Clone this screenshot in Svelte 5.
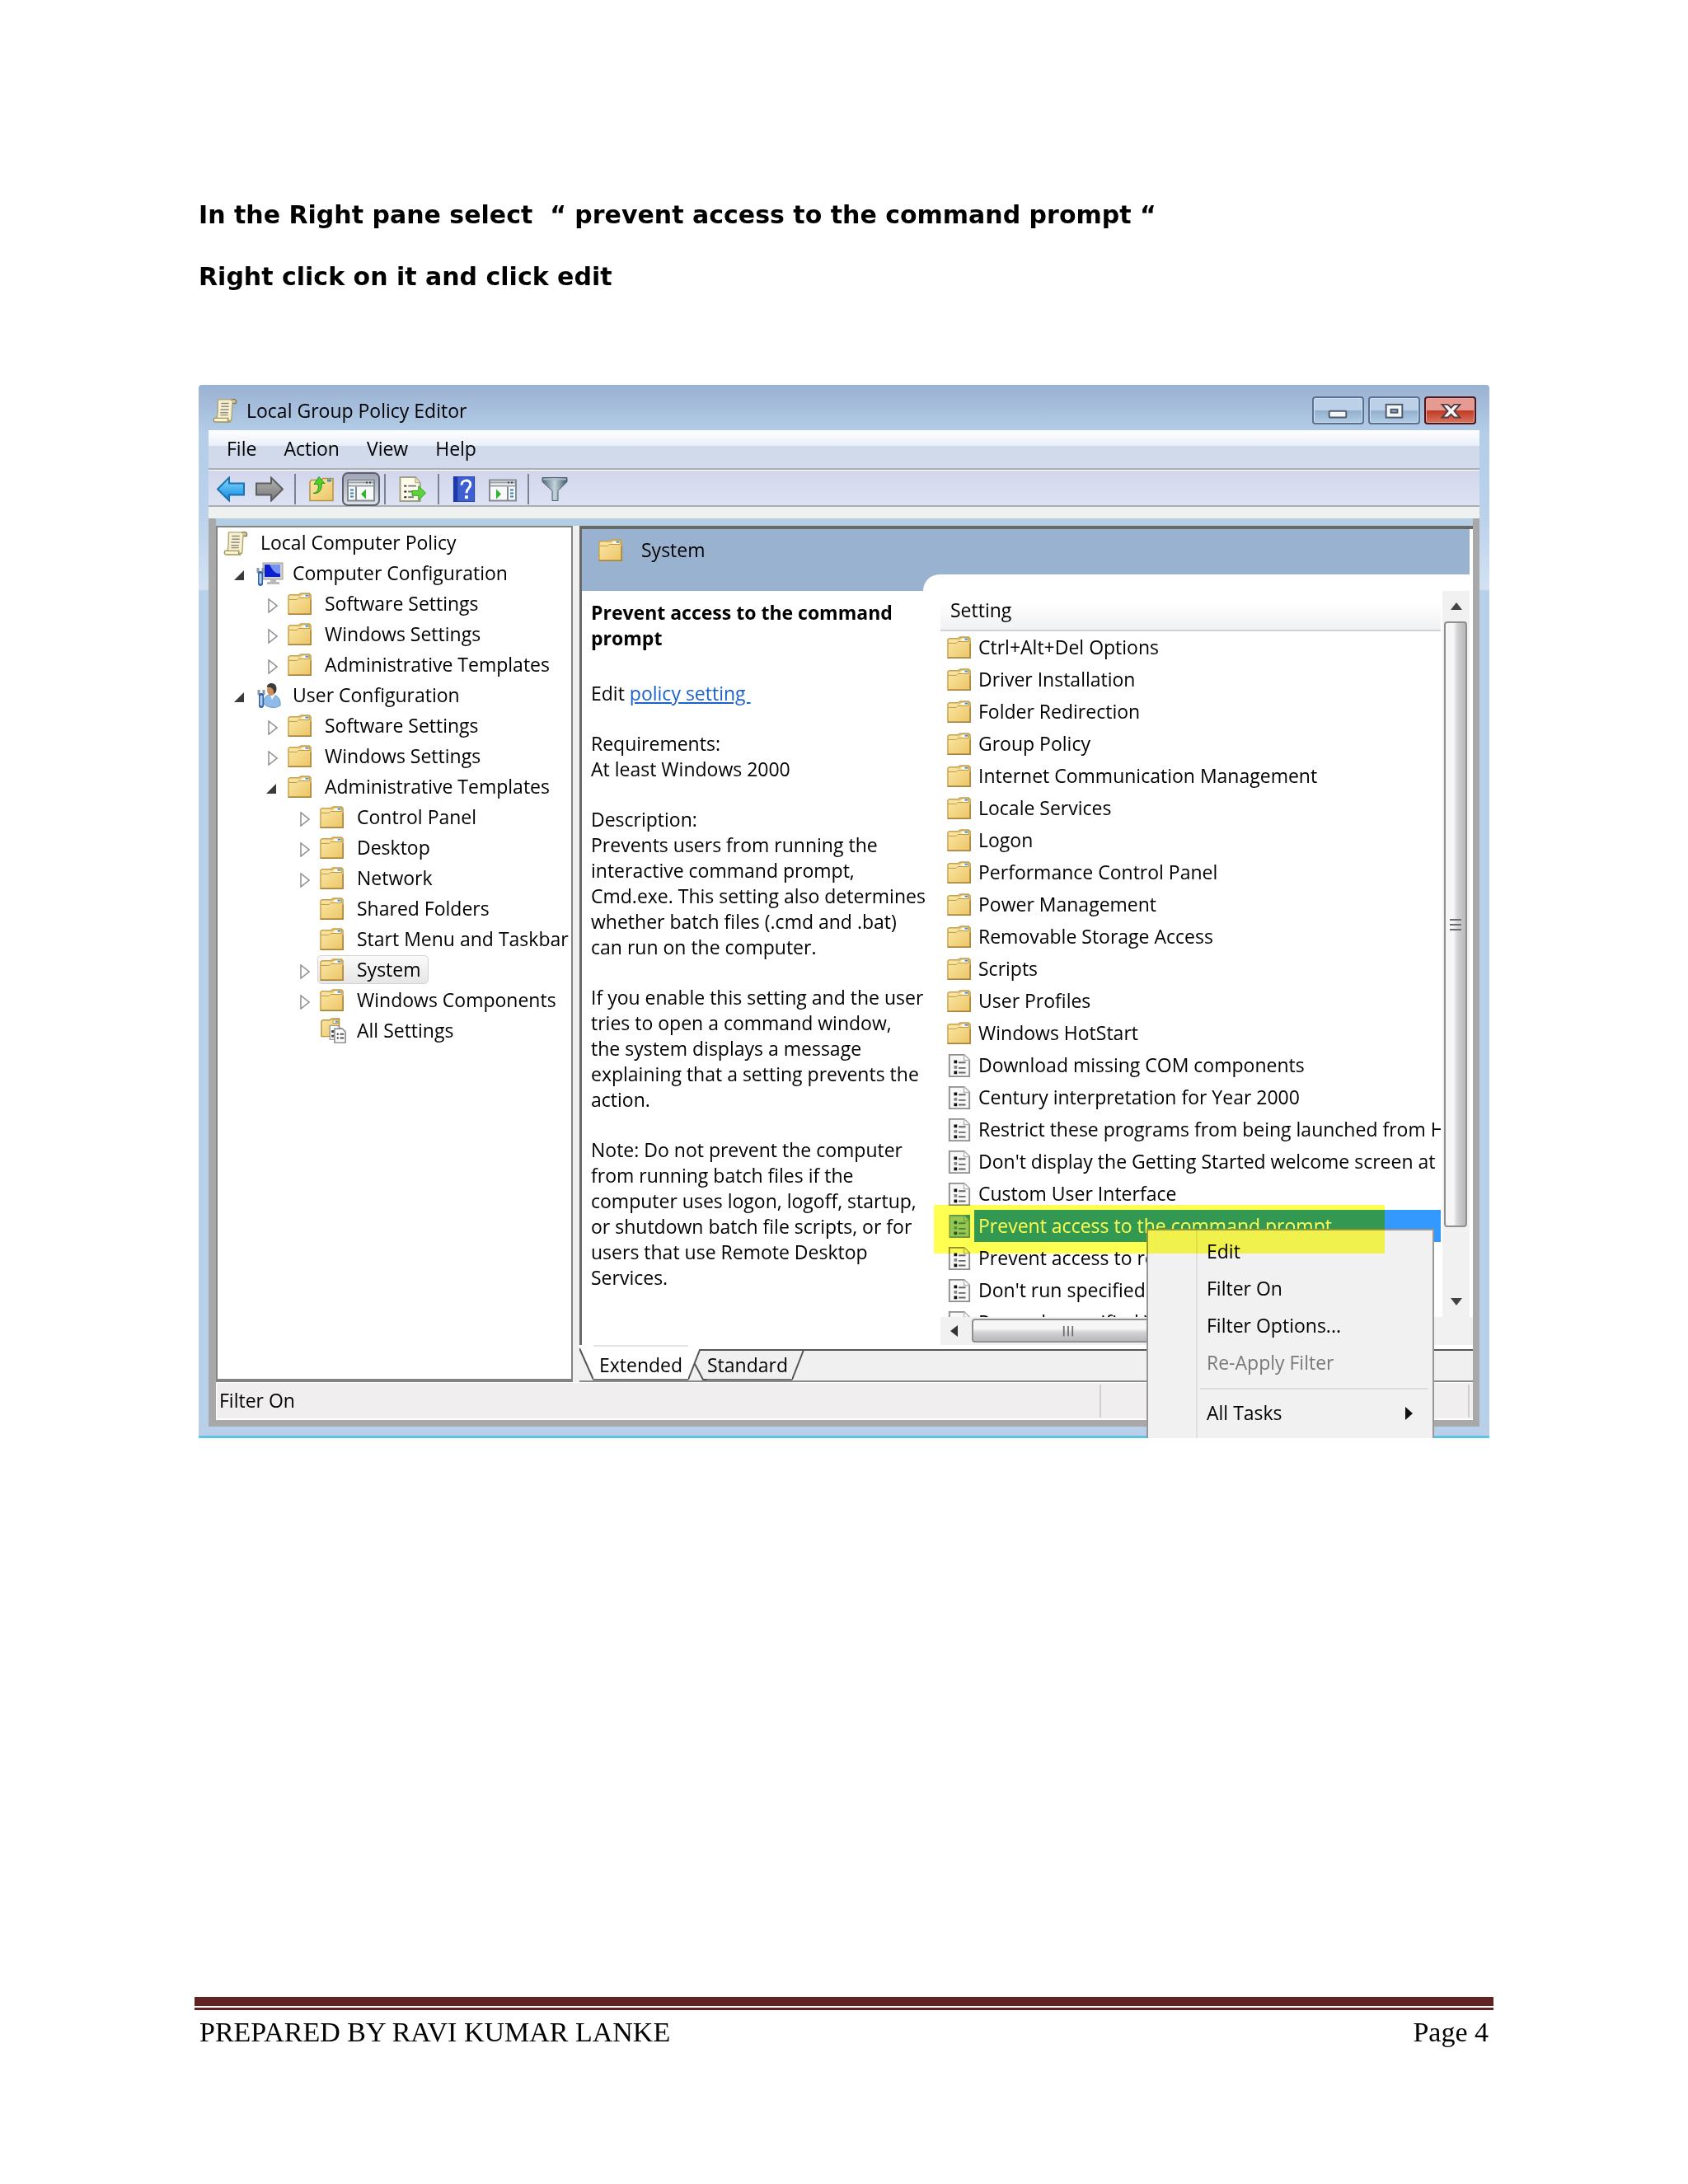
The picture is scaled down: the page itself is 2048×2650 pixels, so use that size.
<script>
	//-- tree shown in the left pane, one entry per row
	const tree = [
		{ label: 'Local Computer Policy', level: 0, icon: 'scroll' },
		{ label: 'Computer Configuration', level: 1, icon: 'computer', open: true },
		{ label: 'Software Settings', level: 2, icon: 'folder', open: false },
		{ label: 'Windows Settings', level: 2, icon: 'folder', open: false },
		{ label: 'Administrative Templates', level: 2, icon: 'folder', open: false },
		{ label: 'User Configuration', level: 1, icon: 'user', open: true },
		{ label: 'Software Settings', level: 2, icon: 'folder', open: false },
		{ label: 'Windows Settings', level: 2, icon: 'folder', open: false },
		{ label: 'Administrative Templates', level: 2, icon: 'folder', open: true },
		{ label: 'Control Panel', level: 3, icon: 'folder', open: false },
		{ label: 'Desktop', level: 3, icon: 'folder', open: false },
		{ label: 'Network', level: 3, icon: 'folder', open: false },
		{ label: 'Shared Folders', level: 3, icon: 'folder' },
		{ label: 'Start Menu and Taskbar', level: 3, icon: 'folder' },
		{ label: 'System', level: 3, icon: 'folder', open: false },
		{ label: 'Windows Components', level: 3, icon: 'folder', open: false },
		{ label: 'All Settings', level: 3, icon: 'all' }
	];

	const folders = [
		'Ctrl+Alt+Del Options',
		'Driver Installation',
		'Folder Redirection',
		'Group Policy',
		'Internet Communication Management',
		'Locale Services',
		'Logon',
		'Performance Control Panel',
		'Power Management',
		'Removable Storage Access',
		'Scripts',
		'User Profiles',
		'Windows HotStart'
	];

	const policies = [
		'Download missing COM components',
		'Century interpretation for Year 2000',
		'Restrict these programs from being launched from Help',
		"Don't display the Getting Started welcome screen at logon",
		'Custom User Interface',
		'Prevent access to the command prompt',
		'Prevent access to registry editing tools',
		"Don't run specified Windows applications",
		'Run only specified Windows applications'
	];

	const settings = [
		...folders.map((label) => ({ label, icon: 'folder' })),
		...policies.map((label) => ({ label, icon: 'policy' }))
	];

	const menus = ['File', 'Action', 'View', 'Help'];

	let node = $state(14);
	let setting = $state(18);
</script>

{#snippet icon(name)}
	{#if name === 'folder'}
		<svg class="icon" viewBox="0 0 32 30" aria-hidden="true">
			<path d="M1 4.500L3 3H14L17 1H28L30 3V28H1Z" fill="url(#folderFill)" stroke="#c6a04c" stroke-width="1.500" />
			<path d="M15 5L18 2H28V7H14L12 9H2" fill="#fbe7a6" stroke="#b8923f" stroke-width="1" />
			<rect x="19" y="3" width="8" height="3" fill="#fff" />
			<rect x="23" y="3" width="4" height="2" fill="#3b8fd0" />
			<path d="M1 28H30V9" fill="none" stroke="#a8823a" stroke-width="1.500" />
		</svg>
	{:else if name === 'policy'}
		<svg class="icon" viewBox="0 0 32 30" aria-hidden="true">
			<path d="M3 1H22L29 8V29H3Z" fill="#f8f8f8" stroke="#8d8d8d" stroke-width="2" />
			<path d="M22 1V8H29" fill="#fff" stroke="#b5b5b5" stroke-width="1.500" />
			<path d="M9 8h4v4h-4zM9 22h4v4h-4z" fill="#111" />
			<path d="M9 15h4v4h-4z" fill="#888" />
			<path d="M15 11H24M15 18H24M15 24H24" stroke="#666" stroke-width="2" />
		</svg>
	{:else if name === 'all'}
		<svg class="icon wide" viewBox="0 0 34 34" aria-hidden="true">
			<path d="M1 4.500L3 3H12L14 1H24V24H1Z" fill="url(#folderFill)" stroke="#b8923f" stroke-width="1.500" />
			<rect x="16" y="3" width="7" height="4" fill="#fff" stroke="#b8923f" />
			<rect x="19" y="4" width="3" height="2" fill="#3b8fd0" />
			<path d="M12 10H22L26 14V28H12Z" fill="#fff" stroke="#9a9a9a" stroke-width="1.500" />
			<path d="M14 16h3v3h-3zM14 22h3v3h-3z" fill="#444" />
			<path d="M18 14H28L32 18V32H18Z" fill="#fff" stroke="#7d7d7d" stroke-width="1.500" />
			<path d="M21 20h2v2h-2zM21 25h2v2h-2z" fill="#222" />
			<path d="M25 21H30M25 26H30" stroke="#555" stroke-width="2" />
		</svg>
	{:else if name === 'scroll'}
		<svg class="icon" viewBox="0 0 32 32" aria-hidden="true">
			<path d="M7 2H27C24 5 26 18 24 29H4C8 24 6 10 7 2Z" fill="#f8f1cf" stroke="#b0a673" stroke-width="1.500" />
			<path d="M24 3C27 0 32 2 30 7H26" fill="#cfc79c" stroke="#857d55" stroke-width="1.500" />
			<path d="M2 26H20C19 28 20 31 23 31H4C1 31 1 28 2 26Z" fill="#fdf6d2" stroke="#a0935c" stroke-width="1.500" />
			<path d="M11 7H21M11 11H21M10 15H21M10 19H20M10 22H20" stroke="#8e8b85" stroke-width="1.500" />
		</svg>
	{:else if name === 'computer'}
		<svg class="icon wide" viewBox="0 0 34 30" aria-hidden="true">
			<rect x="9" y="2" width="24" height="20" fill="#cfd0d0" stroke="#9b9b98" />
			<rect x="11" y="4" width="19" height="15" fill="#0a1fd0" />
			<path d="M17 4H30V15C24 16 20 10 17 4Z" fill="#7492ee" />
			<path d="M18 22h7v3h4v3H14v-3h4z" fill="#b9b9b7" />
			<path d="M3 8v5l3 2 3-2V8" fill="none" stroke="#8b98a8" stroke-width="3" />
			<path d="M6 15V27" stroke="#2f62a8" stroke-width="6" stroke-linecap="round" />
			<path d="M6 16V26" stroke="#b5d0ef" stroke-width="3" stroke-linecap="round" />
		</svg>
	{:else if name === 'user'}
		<svg class="icon wide" viewBox="0 0 34 30" aria-hidden="true">
			<path d="M10 25C9 16 14 14 20 14C27 14 31 20 30 27C24 31 15 30 10 25Z" fill="#8fbbe9" stroke="#6797cb" />
			<path d="M17 13L20 20L24 14Z" fill="#eef5fc" />
			<ellipse cx="19" cy="8" rx="5" ry="7" fill="#c98f5d" />
			<path d="M14 7C13 0 19-1 23 1C27 4 26 12 22 13C23 7 19 4 14 5Z" fill="#3d3b38" />
			<path d="M4 8v5l3 2 3-2V8" fill="none" stroke="#8b98a8" stroke-width="3" />
			<path d="M7 15V27" stroke="#2f62a8" stroke-width="6" stroke-linecap="round" />
			<path d="M7 16V26" stroke="#b5d0ef" stroke-width="3" stroke-linecap="round" />
		</svg>
	{/if}
{/snippet}

<!-- gradients shared by the icons -->
<svg class="defs" aria-hidden="true">
	<defs>
		<linearGradient id="folderFill" x1="0" y1="0" x2="1" y2="1">
			<stop offset="0" stop-color="#fbe9a9" />
			<stop offset="1" stop-color="#ecc566" />
		</linearGradient>
		<linearGradient id="blueArrow" x1="0" y1="0" x2="0" y2="1">
			<stop offset="0" stop-color="#8bdcff" />
			<stop offset="1" stop-color="#0a86e0" />
		</linearGradient>
		<linearGradient id="greyArrow" x1="0" y1="0" x2="0" y2="1">
			<stop offset="0" stop-color="#b4b4b4" />
			<stop offset="1" stop-color="#777" />
		</linearGradient>
		<linearGradient id="funnel" x1="0" y1="0" x2="1" y2="0">
			<stop offset="0" stop-color="#4d6574" />
			<stop offset="0.500" stop-color="#c6d5dc" />
			<stop offset="1" stop-color="#3c5666" />
		</linearGradient>
	</defs>
</svg>

<main class="page">
	<p class="step">In the Right pane select &nbsp;“ prevent access to the command prompt “</p>
	<p class="step">Right click on it and click edit</p>

	<section class="window" aria-label="Local Group Policy Editor">
		<header class="titlebar">
			{@render icon('scroll')}
			<span class="title">Local Group Policy Editor</span>
			<button class="caption" aria-label="Minimize">
				<svg viewBox="0 0 60 30"><rect x="19" y="16" width="21" height="8" rx="1" fill="#f4f6f8" stroke="#4f5b6c" stroke-width="2" /></svg>
			</button>
			<button class="caption" aria-label="Maximize">
				<svg viewBox="0 0 60 30">
					<rect x="20" y="8" width="20" height="16" fill="#f4f6f8" stroke="#4f5b6c" stroke-width="2" />
					<rect x="26" y="14" width="8" height="4" fill="#93abc8" stroke="#4f5b6c" stroke-width="2" />
				</svg>
			</button>
			<button class="caption close" aria-label="Close">
				<svg viewBox="0 0 60 30">
					<path d="M20 8h7l4 4 4-4h7l-7 8 7 8h-7l-4-4-4 4h-7l7-8z" fill="#f6f6f6" stroke="#5a3c44" stroke-width="2" />
				</svg>
			</button>
		</header>

		<nav class="menubar">
			{#each menus as name}
				<button>{name}</button>
			{/each}
		</nav>

		<div class="toolbar">
			<button class="tool" aria-label="Back">
				<svg viewBox="0 0 34 30"><path d="M1 15L15 1V8H33V22H15V29Z" fill="url(#blueArrow)" stroke="#1b72ad" stroke-width="2" /></svg>
			</button>
			<button class="tool" aria-label="Forward">
				<svg viewBox="0 0 34 30"><path d="M33 15L19 1V8H1V22H19V29Z" fill="url(#greyArrow)" stroke="#5e5e5e" stroke-width="2" /></svg>
			</button>
			<i class="sep"></i>
			<button class="tool" aria-label="Up one level">
				<svg viewBox="0 0 34 30">
					<path d="M4 6L6 4H18L20 2H32V29H4Z" fill="url(#folderFill)" stroke="#b8923f" stroke-width="1.500" />
					<rect x="25" y="3" width="5" height="3" fill="#3b8fd0" />
					<path d="M8 20C14 19 15 14 14 9H9L15 0L22 8H18C19 15 16 21 8 20Z" fill="#51cf2a" stroke="#2b961a" stroke-width="1" />
				</svg>
			</button>
			<button class="tool pressed" aria-label="Show or hide console tree" aria-pressed="true">
				<svg viewBox="0 0 34 30">
					<rect x="1" y="4" width="32" height="25" fill="#f7f9fa" stroke="#858b93" stroke-width="2" />
					<path d="M2 7H32M2 11H32" stroke="#9aa0a8" stroke-width="2" />
					<path d="M23 7h2M27 7h2" stroke="#444" stroke-width="2" />
					<path d="M11 12V29" stroke="#888" stroke-width="2" />
					<path d="M4 16H8M4 20H8M4 24H8" stroke="#3a7fc0" stroke-width="2" />
					<path d="M23 15V27L17 21Z" fill="#2fb52a" />
				</svg>
			</button>
			<i class="sep tight"></i>
			<button class="tool" aria-label="Export list">
				<svg viewBox="0 0 34 32">
					<path d="M1 1H20L26 8V31H1Z" fill="#fcfae8" stroke="#a39f82" stroke-width="2" />
					<path d="M20 1V8H26" fill="#e4e0c2" stroke="#a39f82" />
					<path d="M6 11h3v2h-3zM6 18h3v2h-3zM6 25h3v2h-3z" fill="#222" />
					<path d="M11 12H21M11 19H18M11 26H18" stroke="#777" stroke-width="2" />
					<path d="M16 18H24V12L33 21L24 30V24H16Z" fill="#5fd43a" stroke="#2f9c20" stroke-width="1" />
				</svg>
			</button>
			<i class="sep"></i>
			<button class="tool" aria-label="Help">
				<svg viewBox="0 0 34 32">
					<rect x="4" y="0" width="26" height="32" fill="#3d5fd0" stroke="#1c3490" />
					<rect x="4" y="0" width="5" height="32" fill="#1d3aa6" />
					<path d="M14 11C13 4 25 3 25 10C25 15 20 15 20 21" fill="none" stroke="#fff" stroke-width="3" />
					<rect x="18" y="24" width="4" height="4" fill="#fff" />
				</svg>
			</button>
			<button class="tool" aria-label="Show or hide action pane">
				<svg viewBox="0 0 34 30">
					<rect x="1" y="4" width="32" height="25" fill="#f7f9fa" stroke="#858b93" stroke-width="2" />
					<path d="M2 7H32M2 11H32" stroke="#9aa0a8" stroke-width="2" />
					<path d="M23 7h2M27 7h2" stroke="#444" stroke-width="2" />
					<path d="M23 12V29" stroke="#888" stroke-width="2" />
					<path d="M26 16H30M26 20H30M26 24H30" stroke="#3a7fc0" stroke-width="2" />
					<path d="M9 15V27L15 21Z" fill="#2fb52a" />
				</svg>
			</button>
			<i class="sep"></i>
			<button class="tool" aria-label="Filter">
				<svg viewBox="0 0 34 30">
					<path d="M3 1H33V6L22 17V29H15V17L3 6Z" fill="url(#funnel)" stroke="#4a6070" stroke-width="1" />
					<path d="M4 3H32" stroke="#a9bcc6" stroke-width="2" />
				</svg>
			</button>
		</div>

		<div class="band"></div>

		<div class="client">
			<div class="panes">
				<ul class="tree">
					{#each tree as row, i}
						<li class="row level{row.level}">
							{#if row.level > 0}
								<span class="twist">
									{#if row.open === true}
										<svg viewBox="0 0 12 12"><path d="M12 0V12H0Z" fill="#3a3a3a" /></svg>
									{:else if row.open === false}
										<svg class="shut" viewBox="0 0 12 18"><path d="M1 1V17L11 9Z" fill="#fff" stroke="#8f8f8f" stroke-width="1.500" /></svg>
									{/if}
								</span>
							{/if}
							<button class="node" class:selected={node === i} onclick={() => (node = i)}>
								<span class="slot">{@render icon(row.icon)}</span>{row.label}
							</button>
						</li>
					{/each}
				</ul>

				<div class="result">
					<div class="view">
						<div class="heading">
							<h2>{@render icon('folder')}System</h2>
							<div class="curve"></div>
						</div>
						<div class="body">
							<article class="extended">
								<h3>Prevent access to the command<br />prompt</h3>
								<p class="edit">Edit <a href="#policy">policy setting&nbsp;</a></p>
								<p>Requirements:<br />At least Windows 2000</p>
								<p>
									Description:<br />Prevents users from running the<br />interactive command prompt,<br />
									Cmd.exe. This setting also determines<br />whether batch files (.cmd and .bat)<br />
									can run on the computer.
								</p>
								<p>
									If you enable this setting and the user<br />tries to open a command window,<br />
									the system displays a message<br />explaining that a setting prevents the<br />action.
								</p>
								<p>
									Note: Do not prevent the computer<br />from running batch files if the<br />
									computer uses logon, logoff, startup,<br />or shutdown batch file scripts, or for<br />
									users that use Remote Desktop<br />Services.
								</p>
							</article>

							<div class="list">
								<div class="across">
									<div class="items">
										<button class="column">Setting</button>
										<ul>
											{#each settings as item, i}
												<li>
													<button class="item" class:selected={setting === i} onclick={() => (setting = i)}>
														<span class="slot">{@render icon(item.icon)}</span>
														<span class="name">{item.label}</span>
													</button>
												</li>
											{/each}
										</ul>
									</div>
									<div class="vscroll">
										<button class="arrow" aria-label="Scroll up">
											<svg viewBox="0 0 14 9"><path d="M0 9L7 0L14 9Z" fill="#444" /></svg>
										</button>
										<div class="thumb">
											<svg viewBox="0 0 14 16"><path d="M0 2H14M0 8H14M0 14H14" stroke="#6d6d6d" stroke-width="2" /></svg>
										</div>
										<button class="arrow" aria-label="Scroll down">
											<svg viewBox="0 0 14 9"><path d="M0 0L7 9L14 0Z" fill="#444" /></svg>
										</button>
									</div>
								</div>
								<div class="hscroll">
									<button class="arrow" aria-label="Scroll left">
										<svg viewBox="0 0 9 14"><path d="M9 0L0 7L9 14Z" fill="#333" /></svg>
									</button>
									<div class="thumb">
										<svg viewBox="0 0 16 14"><path d="M2 0V14M8 0V14M14 0V14" stroke="#6d6d6d" stroke-width="2" /></svg>
									</div>
								</div>
							</div>
						</div>
					</div>

					<div class="tabs">
						<svg class="slant" width="17" height="43" viewBox="0 0 17 43">
							<path d="M0 0H17V43L0 4Z" fill="#fff" />
							<path d="M0 4L17 42" stroke="#555" stroke-width="2" />
						</svg>
						<button class="tab active">Extended</button>
						<svg class="slant" width="23" height="43" viewBox="0 0 23 43">
							<path d="M0 0H23V5H14L0 43Z" fill="#fff" />
							<path d="M0 42L14 6H23M8 23L18 42H23" fill="none" stroke="#555" stroke-width="2" />
						</svg>
						<button class="tab">Standard</button>
						<svg class="slant" width="17" height="43" viewBox="0 0 17 43">
							<path d="M0 0H17V5H0Z" fill="#fff" />
							<path d="M0 6H17M0 42L14 6" fill="none" stroke="#555" stroke-width="2" />
						</svg>
						<div class="rest"></div>
					</div>
				</div>
			</div>

			<footer class="status">
				<span>Filter On</span>
				<i></i>
			</footer>
		</div>

		<div class="context">
			<div class="gutter"></div>
			<div class="commands">
				<button>Edit</button>
				<button>Filter On</button>
				<button>Filter Options...</button>
				<button disabled>Re-Apply Filter</button>
				<hr />
				<button class="more">
					All Tasks
					<svg viewBox="0 0 9 16"><path d="M0 0L9 8L0 16Z" fill="#111" /></svg>
				</button>
			</div>
		</div>

		<div class="marker"></div>
	</section>

	<footer class="foot">
		<div class="rule"></div>
		<div class="line">
			<span>PREPARED BY RAVI KUMAR LANKE</span>
			<span>Page 4</span>
		</div>
	</footer>
</main>

<style>
	:global(body) {
		margin: 0;
		background: #fff;
	}

	.defs {
		position: absolute;
		width: 0;
		height: 0;
	}

	.page {
		display: flex;
		flex-direction: column;
		box-sizing: border-box;
		min-height: 100vh;
		padding: 242px 241px 157px;
		color: #000;
	}

	.step {
		margin: 0 0 37px;
		font: bold 30px/38px 'DejaVu Sans', Verdana, sans-serif;
		white-space: nowrap;
	}

	button {
		margin: 0;
		padding: 0;
		border: 0;
		background: none;
		color: inherit;
		font: inherit;
		text-align: left;
		white-space: nowrap;
	}

	svg {
		display: block;
	}

	.icon {
		flex: none;
		width: 30px;
		height: 30px;
	}

	.icon.wide {
		width: 34px;
		height: 32px;
	}

	.slot {
		display: flex;
		flex: none;
	}

	/* window frame */

	.window {
		position: relative;
		margin-top: 75px;
		padding: 0 12px 14px;
		border-radius: 4px 4px 0 0;
		background:
			linear-gradient(#5cc5e2, #5cc5e2) bottom / 100% 3px no-repeat,
			linear-gradient(#9ab2d1 0, #b4cde8 60px, #bad2eb 160px, #d3e2f3 248px, #b9d0ea 250px);
		font: 23px/31px 'Open Sans', 'Segoe UI', sans-serif;
		overflow: hidden;
	}

	.titlebar {
		display: flex;
		align-items: center;
		gap: 5px;
		height: 55px;
		padding: 7px 4px 0 5px;
		box-sizing: border-box;
	}

	.title {
		flex: 1;
		margin-left: 6px;
	}

	.caption {
		width: 63px;
		height: 34px;
		box-sizing: border-box;
		border: 2px solid #5c7191;
		border-radius: 4px;
		box-shadow: inset 0 0 0 1px #d3e2f2;
		background: linear-gradient(#bcd0e8 50%, #94afcd 50%, #b0cbe4);
	}

	.caption.close {
		border-color: #4b1620;
		box-shadow: inset 0 0 0 1px #eba79c;
		background: linear-gradient(#e59b92 50%, #bd3a23 50%, #d9745d);
	}

	.menubar {
		display: flex;
		gap: 33px;
		height: 46px;
		padding-left: 22px;
		border-bottom: 2px solid #a9adb4;
		background: linear-gradient(#fff, #e9eef8 19px, #cfdaeb 19px, #d3daec);
	}

	.menubar button {
		padding-bottom: 2px;
	}

	.toolbar {
		display: flex;
		align-items: center;
		gap: 13px;
		height: 45px;
		padding: 3px 0 0 10px;
		border-top: 1px solid #fff;
		border-bottom: 2px solid #a9adb4;
		box-sizing: border-box;
		background: linear-gradient(#d2d6ec, #dde2f3);
	}

	.tool svg {
		width: 34px;
		height: 31px;
	}

	.tool.pressed {
		margin: 0 -6px 0 -4px;
		padding: 3px 4px;
		border: 2px solid #5b606c;
		border-radius: 7px;
		background: linear-gradient(#9fa5b5, #dfe2ea);
	}

	.sep {
		width: 2px;
		height: 37px;
		background: #7e8290;
	}

	.sep.tight {
		margin: 0 3px 0 -2px;
	}

	.band {
		height: 14px;
		background: #eff1f1;
	}

	.client {
		border: solid #a8a8a8;
		border-width: 0 8px 8px 9px;
		background: #b3cde3;
		padding-top: 9px;
	}

	.panes {
		display: flex;
		background: #f0f0f0;
	}

	/* left pane */

	.tree {
		flex: none;
		width: 429px;
		margin: 0 8px 0 0;
		padding: 0;
		border: solid #838383;
		border-width: 2px 2px 4px;
		background: #fff;
		list-style: none;
		overflow: hidden;
	}

	.row {
		display: flex;
		align-items: center;
		height: 37px;
	}

	.level0 { padding-left: 4px; }
	.level1 { padding-left: 17px; }
	.level2 { padding-left: 56px; }
	.level3 { padding-left: 95px; }

	.twist {
		display: flex;
		flex: none;
		width: 26px;
	}

	.twist svg {
		width: 12px;
		height: 12px;
		margin: 4px 0 0 3px;
	}

	.twist svg.shut {
		height: 18px;
		margin-left: 5px;
	}

	.node {
		display: flex;
		flex: none;
		align-items: center;
		height: 35px;
		padding: 0 8px 0 2px;
		border: 1px solid transparent;
		border-radius: 5px;
		box-sizing: border-box;
	}

	.node .slot {
		width: 45px;
	}

	.node.selected {
		border-color: #d4d4d4;
		background: linear-gradient(#fafafa, #e6e6e6);
	}

	/* right pane */

	.result {
		display: flex;
		flex: 1;
		flex-direction: column;
		min-width: 0;
	}

	.view {
		flex: 1;
		border: solid #696969;
		border-width: 4px 0 0 3px;
		background: #fff;
	}

	.heading {
		display: flex;
		flex-direction: column;
		height: 75px;
		margin-right: 4px;
		background: #99b2d0;
	}

	.heading h2 {
		display: flex;
		flex: 1;
		align-items: center;
		gap: 22px;
		margin: 0;
		padding: 0 0 4px 20px;
		font: inherit;
	}

	.curve {
		height: 20px;
		margin-left: 414px;
		border-radius: 20px 0 0 0;
		background: #fff;
	}

	.body {
		display: flex;
	}

	.extended {
		flex: none;
		width: 424px;
		padding: 11px 0 0 11px;
		white-space: nowrap;
	}

	.extended h3 {
		margin: 0 0 36px;
		font-size: 23px;
		line-height: 31px;
	}

	.extended p {
		margin: 0 0 30px;
	}

	.extended a {
		color: #1b62c8;
	}

	.list {
		flex: 1;
		min-width: 0;
	}

	.across {
		display: flex;
		padding-right: 4px;
	}

	.items {
		flex: 1;
		min-width: 0;
		padding-right: 2px;
	}

	.items ul {
		height: 832px;
		margin: 0;
		padding: 0;
		list-style: none;
		overflow: hidden;
	}

	.column {
		display: block;
		width: 100%;
		height: 49px;
		padding: 0 0 0 12px;
		border-bottom: 2px solid #d2d2d4;
		background: linear-gradient(#fff 30%, #f0f1f3);
	}

	.item {
		display: flex;
		align-items: center;
		width: 100%;
		height: 39px;
		padding-left: 8px;
	}

	.item .slot {
		width: 33px;
	}

	.item .name {
		flex: 1;
		min-width: 0;
		padding-left: 5px;
		line-height: 39px;
		overflow: hidden;
	}

	.item.selected .name {
		background: #3399ff;
		color: #fff;
	}

	.item.selected .slot {
		background: linear-gradient(#3399ff, #3399ff) 3px 1px / 25px 28px no-repeat;
	}

	.item.selected .slot :global(svg) {
		opacity: 0.5;
	}

	.vscroll {
		display: flex;
		flex: none;
		flex-direction: column;
		width: 33px;
		background: #f1f1f1;
	}

	.arrow {
		display: flex;
		flex: none;
		align-items: center;
		justify-content: center;
	}

	.vscroll .arrow {
		height: 37px;
	}

	.arrow svg {
		width: 14px;
		height: 9px;
	}

	.thumb {
		display: flex;
		align-items: center;
		justify-content: center;
		border: 2px solid #8f8f8f;
		border-radius: 4px;
		box-sizing: border-box;
	}

	.thumb svg {
		width: 14px;
		height: 16px;
	}

	.vscroll .thumb {
		flex: 1;
		margin: 0 3px 72px 2px;
		background: linear-gradient(90deg, #f6f6f6 40%, #d2d2d4 60%, #b8b8bc);
	}

	.hscroll {
		display: flex;
		height: 34px;
		background: #f1f1f1;
	}

	.hscroll .arrow {
		width: 38px;
	}

	.hscroll .arrow svg {
		width: 9px;
		height: 14px;
		margin-right: 6px;
	}

	.hscroll .thumb {
		width: 234px;
		margin: 2px 0 3px;
		background: linear-gradient(#f6f6f6 40%, #d2d2d4 60%, #b8b8bc);
	}

	.tabs {
		display: flex;
		height: 43px;
		border-bottom: 2px solid #8a8a8a;
	}

	.tab {
		width: 103px;
		margin-top: 5px;
		border-top: 2px solid #555;
		border-bottom: 2px solid #777;
		box-shadow: 0 -5px #fff;
	}

	.tab.active {
		width: 115px;
		margin-top: 0;
		padding: 5px 0 0 7px;
		border-top-color: #e4e4e4;
		background: #fff;
		box-shadow: none;
	}

	.rest {
		flex: 1;
		margin-top: 5px;
		border-top: 2px solid #555;
		box-shadow: 0 -5px #fff;
	}

	.status {
		display: flex;
		align-items: center;
		height: 46px;
		padding-left: 3px;
		border: solid #fff;
		border-width: 1px 0 2px 1px;
		box-sizing: border-box;
		background: #f0eeee;
	}

	.status span {
		flex: 1;
	}

	.status i {
		width: 445px;
		height: 40px;
		margin-right: 4px;
		border: solid #cfcfcf;
		border-width: 0 2px;
	}

	/* popup over the list */

	.context {
		display: flex;
		position: absolute;
		top: 1024px;
		bottom: 0;
		left: 1150px;
		width: 349px;
		border: 2px solid #979797;
		border-bottom: 0;
		box-sizing: border-box;
		background: #f1f1f1;
	}

	.gutter {
		width: 58px;
		border-right: 2px solid #e0e0e0;
	}

	.commands {
		flex: 1;
		padding: 3px 5px 0 3px;
	}

	.commands button {
		display: flex;
		align-items: center;
		width: 100%;
		height: 45px;
		padding: 0 19px 0 8px;
	}

	.commands button:disabled {
		color: #7a7a7a;
	}

	.commands hr {
		margin: 8px 0 6px;
		border: 0;
		border-top: 2px solid #dcdcdc;
	}

	.commands .more {
		justify-content: space-between;
	}

	.more svg {
		width: 9px;
		height: 16px;
	}

	/* yellow highlighter stroke */

	.marker {
		position: absolute;
		top: 995px;
		left: 892px;
		width: 547px;
		height: 59px;
		background: #ffff52;
		mix-blend-mode: multiply;
		pointer-events: none;
	}

	.foot {
		margin: auto -5px 0;
		font: 34px/54px 'Liberation Serif', Cambria, serif;
	}

	.rule {
		height: 2px;
		border: solid #622423;
		border-width: 11px 0 3px;
	}

	.line {
		display: flex;
		justify-content: space-between;
		padding: 0 6px;
	}
</style>
